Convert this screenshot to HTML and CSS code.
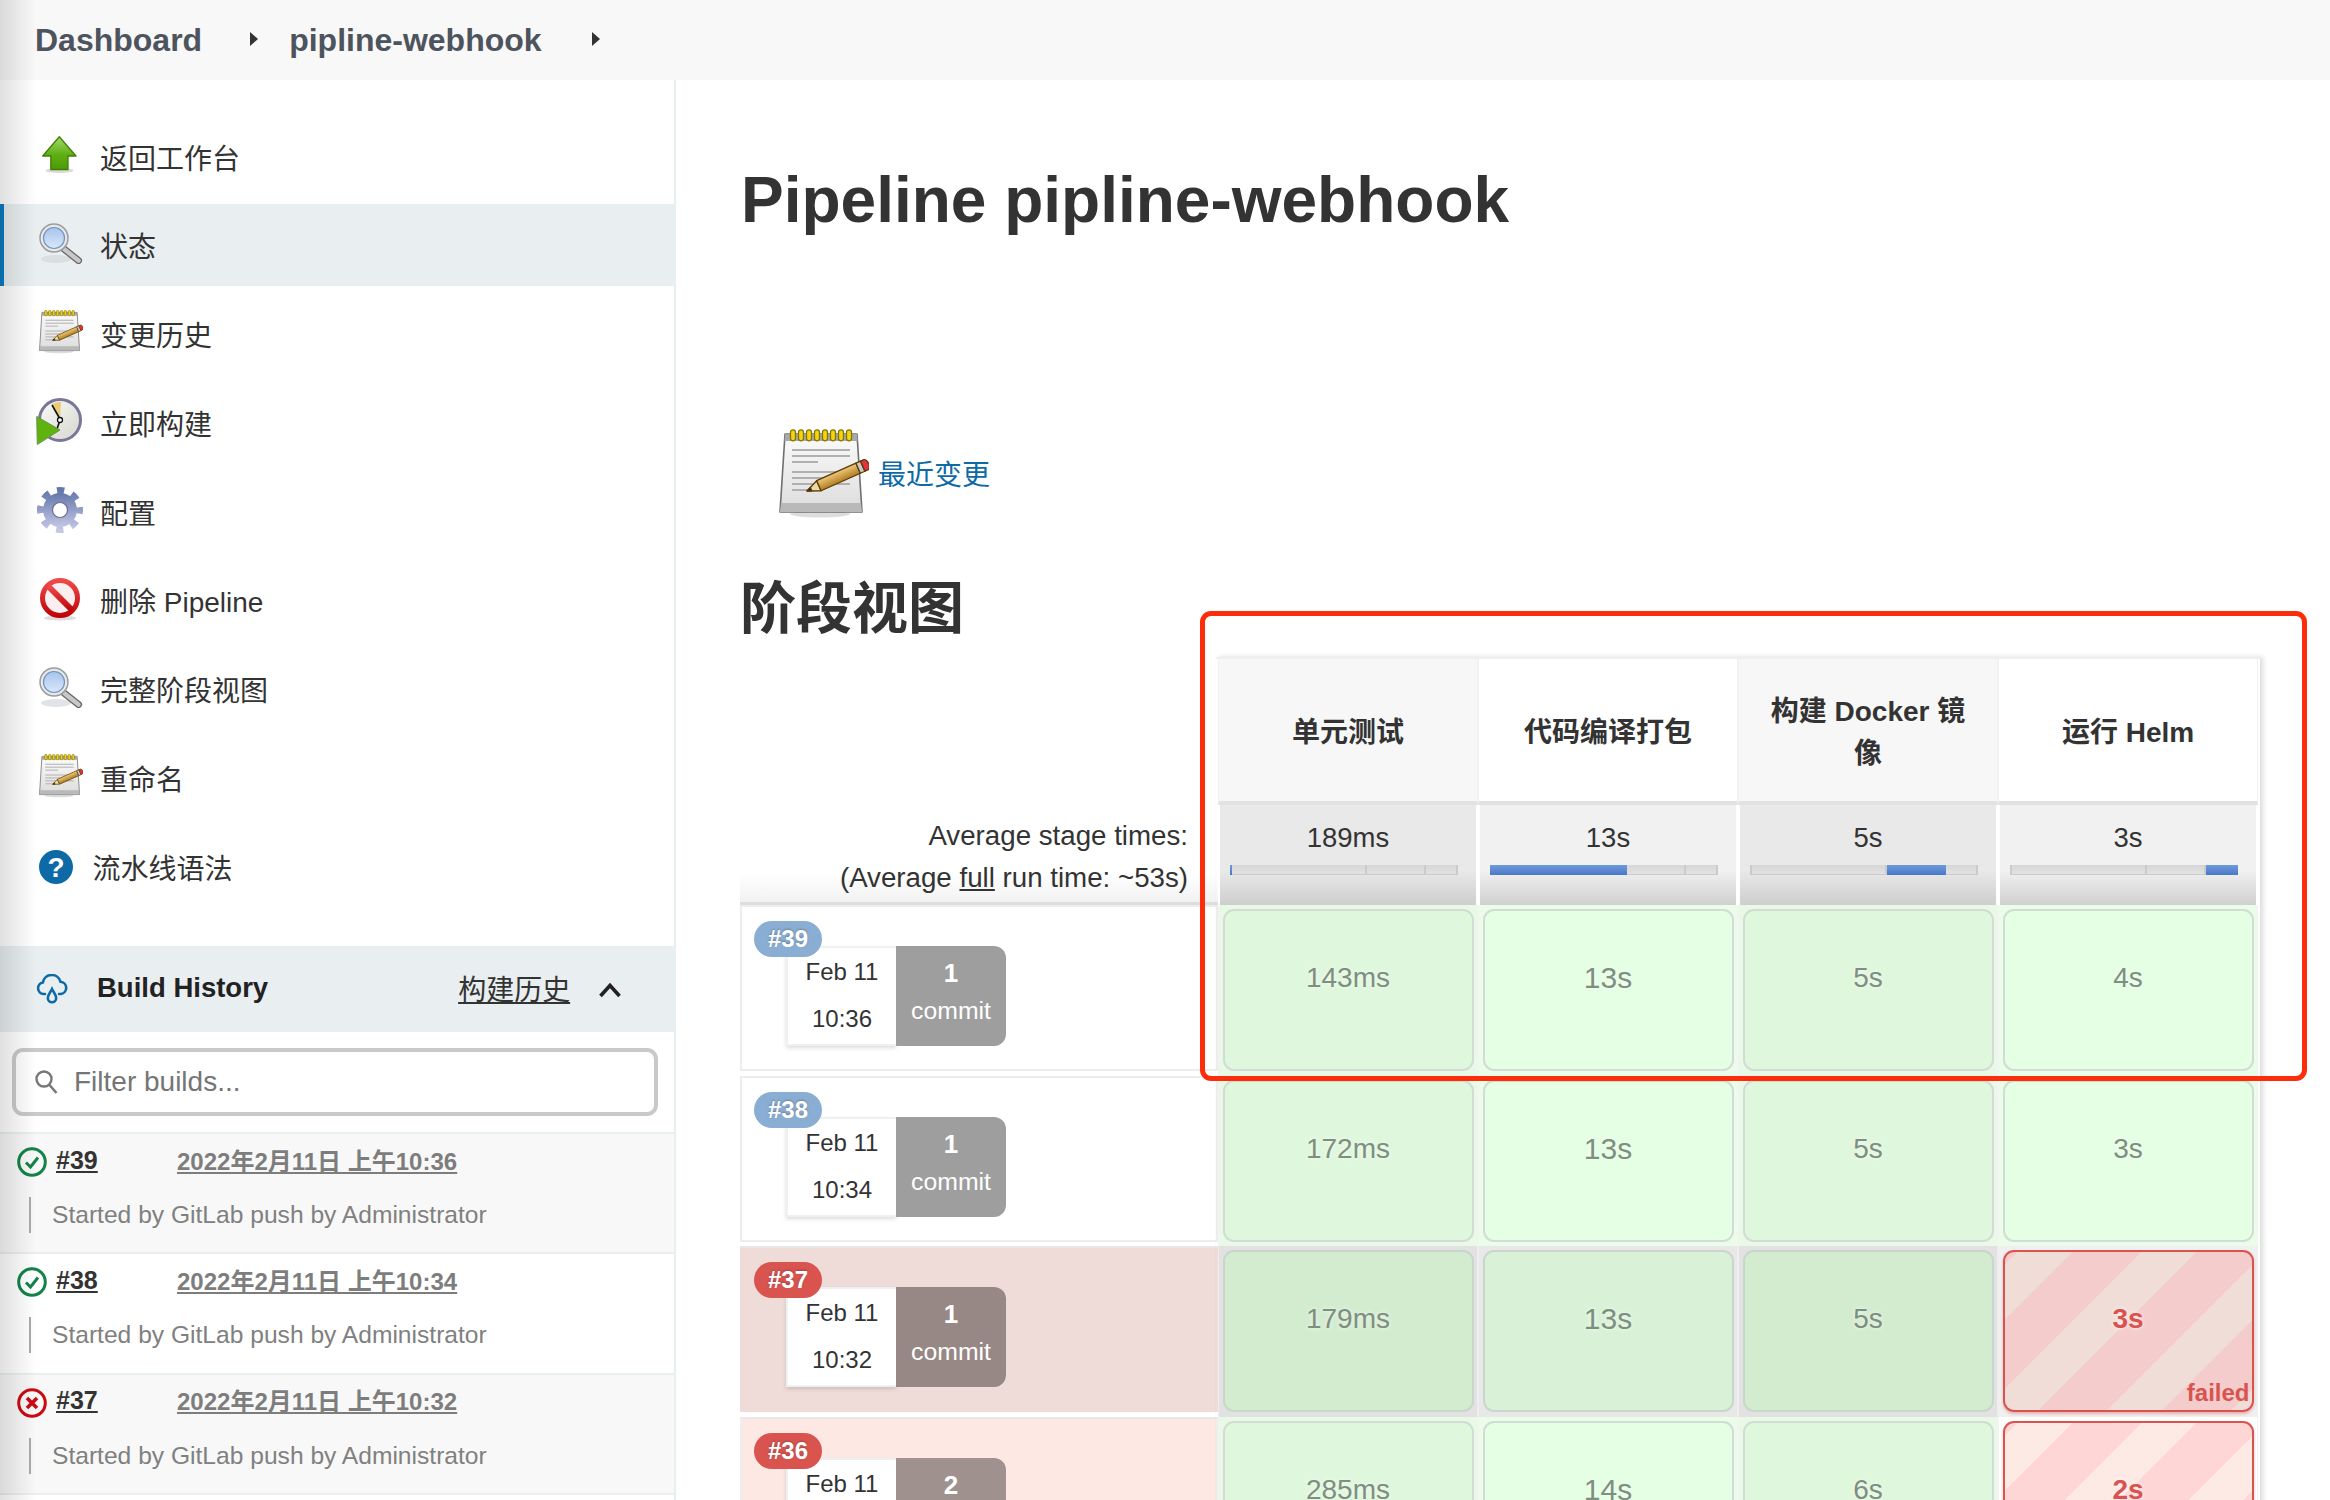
FILE: index.html
```html
<!DOCTYPE html>
<html lang="en">
<head>
    <meta charset="UTF-8">
    <meta name="viewport" content="width=device-width, initial-scale=1.0">
    <title>pipline-webhook</title>
    <link rel="stylesheet" href="styles.css">
</head>
<body>
    <svg class="sprite" xmlns="http://www.w3.org/2000/svg">
        <defs>
            <linearGradient id="g-green" x1="0" y1="0" x2="0" y2="1"><stop offset="0" stop-color="#a4d96a"/><stop offset=".55" stop-color="#5fae14"/><stop offset="1" stop-color="#4c9a06"/></linearGradient>
            <linearGradient id="g-page" x1="0" y1="0" x2="0" y2="1"><stop offset="0" stop-color="#fbfbfb"/><stop offset="1" stop-color="#dcdcdc"/></linearGradient>
            <linearGradient id="g-pencil" x1="0" y1="0" x2="0" y2="1"><stop offset="0" stop-color="#efc878"/><stop offset="1" stop-color="#b07c22"/></linearGradient>
            <linearGradient id="g-lens" x1="0" y1="0" x2="0" y2="1"><stop offset="0" stop-color="#a6c4ec"/><stop offset="1" stop-color="#dbe8f8"/></linearGradient>
            <linearGradient id="g-gear" x1="0" y1="0" x2="0" y2="1"><stop offset="0" stop-color="#6478ac"/><stop offset="1" stop-color="#c4c6e4"/></linearGradient>
            <linearGradient id="g-face" x1="0" y1="0" x2="1" y2="1"><stop offset="0" stop-color="#fafafa"/><stop offset="1" stop-color="#d6d6cc"/></linearGradient>
            <linearGradient id="g-stop" x1="0" y1="0" x2="0" y2="1"><stop offset="0" stop-color="#ef4a4a"/><stop offset="1" stop-color="#bf0508"/></linearGradient>
        </defs>
        <symbol id="i-notepad" viewBox="0 0 90 90">
            <ellipse cx="41" cy="85" rx="30" ry="3.5" fill="#ddd"/>
            <path d="M6 5H78L83 83H1Z" fill="url(#g-page)" stroke="#6f6f6f" stroke-width="1.6" stroke-linejoin="round"/>
            <path d="M6 5H78L78.500 12H5.500Z" fill="#a8a8a8"/>
            <path d="M2 74H82L83 83H1Z" fill="#b9b9b9"/>
            <g stroke="#b0b0b0" stroke-width="2">
                <path d="M13 21H71M13 27H71M13 33H39M13 43H71M13 49H62M13 55H71M13 61H40"/>
            </g>
            <g fill="#f0d416" stroke="#8a7400" stroke-width="1.300">
                <rect x="11.500" y="0.800" width="5" height="11" rx="2.500"/>
                <rect x="19.500" y="0.800" width="5" height="11" rx="2.500"/>
                <rect x="27.500" y="0.800" width="5" height="11" rx="2.500"/>
                <rect x="35.500" y="0.800" width="5" height="11" rx="2.500"/>
                <rect x="43.500" y="0.800" width="5" height="11" rx="2.500"/>
                <rect x="51.500" y="0.800" width="5" height="11" rx="2.500"/>
                <rect x="59.500" y="0.800" width="5" height="11" rx="2.500"/>
                <rect x="67.500" y="0.800" width="5" height="11" rx="2.500"/>
            </g>
            <g transform="translate(28 62) rotate(-24)" stroke="#5a3b05" stroke-width="1.300" stroke-linejoin="round">
                <path d="M0 0L13 -5.500V5.500Z" fill="#ecd9a8"/>
                <path d="M0 0L4.500 -1.900V1.900Z" fill="#222"/>
                <rect x="13" y="-5.500" width="43" height="11" fill="url(#g-pencil)"/>
                <rect x="56" y="-5.500" width="5" height="11" fill="#c9c9c9"/>
                <path d="M61 -5.500H64a3.500 5.500 0 0 1 0 11H61Z" fill="#e6323a"/>
            </g>
        </symbol>
        <symbol id="i-search" viewBox="0 0 44 42">
            <ellipse cx="17" cy="37" rx="15" ry="4" fill="#d4d8dc" opacity=".7"/>
            <path d="M25 27L39.500 38.500" stroke="#666" stroke-width="7" stroke-linecap="round"/>
            <path d="M25 27L39.500 38.500" stroke="#c8c8c8" stroke-width="4.500" stroke-linecap="round"/>
            <circle cx="15" cy="16" r="14" fill="#e8e8e8" stroke="#9c9c9c" stroke-width="1.500"/>
            <circle cx="15" cy="16" r="10.500" fill="url(#g-lens)" stroke="#6f93c6" stroke-width="1.200"/>
        </symbol>
    </svg>

    <header class="crumbs">
        <a class="crumb">Dashboard</a>
        <span class="crumb-arrow"></span>
        <a class="crumb">pipline-webhook</a>
        <span class="crumb-arrow"></span>
    </header>

    <div class="page">
        <aside class="sidebar">
            <nav class="tasks">
                <a class="task">
                    <span class="task-icon icon-arrow">
                        <svg width="36" height="38" viewBox="0 0 36 38">
                            <ellipse cx="17.500" cy="34.500" rx="14" ry="2.500" fill="#d9d9d9"/>
                            <path d="M17.300 .8L34 20H26V33.500H8.800V20H.7Z" fill="url(#g-green)" stroke="#3f8004" stroke-width="1.300" stroke-linejoin="round"/>
                        </svg>
                    </span>
                    <span>返回工作台</span>
                </a>
                <a class="task active">
                    <span class="task-icon icon-small"><svg width="44" height="42"><use href="#i-search"/></svg></span>
                    <span>状态</span>
                </a>
                <a class="task">
                    <span class="task-icon icon-small"><svg width="44" height="44"><use href="#i-notepad"/></svg></span>
                    <span>变更历史</span>
                </a>
                <a class="task">
                    <span class="task-icon">
                        <svg width="48" height="48" viewBox="0 0 48 48">
                            <circle cx="24" cy="23" r="20.500" fill="url(#g-face)" stroke="#77759a" stroke-width="3"/>
                            <path d="M24 23L16 7A18 18 0 0 1 25 5Z" fill="#eccb74"/>
                            <path d="M16 8L24 22" stroke="#111" stroke-width="1.600"/>
                            <path d="M24 23L21 32" stroke="#111" stroke-width="1.600"/>
                            <circle cx="24" cy="23" r="2.500" fill="#fff" stroke="#111" stroke-width="1.300"/>
                            <path d="M.7 19.500L24 33L1.300 47.500Z" fill="#5fb30e" stroke="#6a8f4a" stroke-width="1"/>
                        </svg>
                    </span>
                    <span>立即构建</span>
                </a>
                <a class="task">
                    <span class="task-icon">
                        <svg width="48" height="48" viewBox="0 0 48 48">
                            <circle cx="24" cy="24" r="19.500" fill="none" stroke="url(#g-gear)" stroke-width="7" stroke-dasharray="7.300 8.010" stroke-dashoffset="3.600"/>
                            <circle cx="24" cy="24" r="17" fill="url(#g-gear)"/>
                            <circle cx="24" cy="24" r="7.500" fill="#fff" stroke="#6a6c8e" stroke-width="1.200"/>
                        </svg>
                    </span>
                    <span>配置</span>
                </a>
                <a class="task">
                    <span class="task-icon icon-stop">
                        <svg width="42" height="44" viewBox="0 0 42 44">
                            <ellipse cx="21" cy="40" rx="16" ry="2.500" fill="#ddd"/>
                            <circle cx="21" cy="20" r="17.500" fill="#fbeeee" stroke="url(#g-stop)" stroke-width="5"/>
                            <path d="M9 8L33 32" stroke="url(#g-stop)" stroke-width="6"/>
                        </svg>
                    </span>
                    <span>删除 Pipeline</span>
                </a>
                <a class="task">
                    <span class="task-icon icon-small"><svg width="44" height="42"><use href="#i-search"/></svg></span>
                    <span>完整阶段视图</span>
                </a>
                <a class="task">
                    <span class="task-icon icon-small"><svg width="44" height="44"><use href="#i-notepad"/></svg></span>
                    <span>重命名</span>
                </a>
                <a class="task task-help">
                    <span class="task-icon">
                        <svg width="34" height="34" viewBox="0 0 34 34">
                            <circle cx="17" cy="17" r="17" fill="#0d6aa6"/>
                            <text x="17" y="27" class="help-mark">?</text>
                        </svg>
                    </span>
                    <span>流水线语法</span>
                </a>
            </nav>

            <section class="history-head">
                <svg class="cloud" width="32" height="30" viewBox="0 0 32 30">
                    <path d="M9 20H7.500a5.800 5.800 0 0 1-.6-11.500a9 9 0 0 1 17.600-.8a6.200 6.200 0 0 1 .5 12.300H23" fill="none" stroke="#0d6aa6" stroke-width="2.600" stroke-linecap="round"/>
                    <path d="M16 15c-2 4-4.200 6-4.200 9a4.200 4.200 0 0 0 8.400 0c0-3-2.200-5-4.200-9Z" fill="none" stroke="#0d6aa6" stroke-width="2.600"/>
                </svg>
                <strong class="history-title">Build History</strong>
                <a class="history-link">构建历史</a>
                <svg class="chevron" width="24" height="16" viewBox="0 0 24 16">
                    <path d="M2.500 14L12 3.500L21.500 14" fill="none" stroke="#222" stroke-width="3.600"/>
                </svg>
            </section>

            <div class="filter-wrap">
                <div class="filter">
                    <svg width="24" height="26" viewBox="0 0 24 26">
                        <circle cx="10" cy="10" r="7.500" fill="none" stroke="#777" stroke-width="2.400"/>
                        <path d="M15.500 16L22.500 24" stroke="#777" stroke-width="2.600"/>
                    </svg>
                    <span>Filter builds...</span>
                </div>
            </div>

            <div class="builds">
                <div class="build odd">
                    <div class="build-top">
                        <svg class="status" width="30" height="30" viewBox="0 0 30 30">
                            <circle cx="15" cy="15" r="13.300" fill="none" stroke="#138347" stroke-width="3"/>
                            <path d="M9 15.500L13.500 20L21 10.500" fill="none" stroke="#138347" stroke-width="3"/>
                        </svg>
                        <a class="build-no">#39</a>
                        <a class="build-date">2022年2月11日 上午10:36</a>
                    </div>
                    <div class="build-cause">Started by GitLab push by Administrator</div>
                </div>
                <div class="build">
                    <div class="build-top">
                        <svg class="status" width="30" height="30" viewBox="0 0 30 30">
                            <circle cx="15" cy="15" r="13.300" fill="none" stroke="#138347" stroke-width="3"/>
                            <path d="M9 15.500L13.500 20L21 10.500" fill="none" stroke="#138347" stroke-width="3"/>
                        </svg>
                        <a class="build-no">#38</a>
                        <a class="build-date">2022年2月11日 上午10:34</a>
                    </div>
                    <div class="build-cause">Started by GitLab push by Administrator</div>
                </div>
                <div class="build odd">
                    <div class="build-top">
                        <svg class="status" width="30" height="30" viewBox="0 0 30 30">
                            <circle cx="15" cy="15" r="13.300" fill="none" stroke="#cc0a12" stroke-width="3"/>
                            <path d="M10 10L20 20M20 10L10 20" fill="none" stroke="#cc0a12" stroke-width="3.600"/>
                        </svg>
                        <a class="build-no">#37</a>
                        <a class="build-date">2022年2月11日 上午10:32</a>
                    </div>
                    <div class="build-cause">Started by GitLab push by Administrator</div>
                </div>
                <div class="build"></div>
            </div>
        </aside>

        <main class="content">
            <h1 class="title">Pipeline pipline-webhook</h1>

            <div class="recent">
                <svg width="90" height="90"><use href="#i-notepad"/></svg>
                <a class="recent-link">最近变更</a>
            </div>

            <h2 class="stage-title">阶段视图</h2>

            <div class="stage-view">
                <div class="stage-row">
                    <div class="blank"></div>
                    <div class="stage-name">单元测试</div>
                    <div class="stage-name">代码编译打包</div>
                    <div class="stage-name">构建 Docker 镜像</div>
                    <div class="stage-name">运行 Helm</div>
                </div>
                <div class="stage-row">
                    <div class="avg-label">
                        <div>Average stage times:</div>
                        <div>(Average <u>full</u> run time: ~53s)</div>
                    </div>
                    <div class="avg-cell">
                        <div>189ms</div>
                        <div class="bar"><i class="on" style="width:1%"></i><i style="width:59%"></i><i style="width:26%"></i><i style="width:14%"></i></div>
                    </div>
                    <div class="avg-cell">
                        <div>13s</div>
                        <div class="bar"><i style="width:1%" class="on"></i><i class="on" style="width:59%"></i><i style="width:26%"></i><i style="width:14%"></i></div>
                    </div>
                    <div class="avg-cell">
                        <div>5s</div>
                        <div class="bar"><i style="width:1%"></i><i style="width:59%"></i><i class="on" style="width:26%"></i><i style="width:14%"></i></div>
                    </div>
                    <div class="avg-cell">
                        <div>3s</div>
                        <div class="bar"><i style="width:1%"></i><i style="width:59%"></i><i style="width:26%"></i><i class="on" style="width:14%"></i></div>
                    </div>
                </div>

                <div class="stage-row build-row">
                    <div class="run">
                        <span class="badge">#39</span>
                        <div class="run-when"><div>Feb 11</div><div>10:36</div></div>
                        <div class="run-commits"><b>1</b><span>commit</span></div>
                    </div>
                    <div class="cell"><div class="card">143ms</div></div>
                    <div class="cell"><div class="card big">13s</div></div>
                    <div class="cell"><div class="card">5s</div></div>
                    <div class="cell"><div class="card">4s</div></div>
                </div>
                <div class="stage-row build-row">
                    <div class="run">
                        <span class="badge">#38</span>
                        <div class="run-when"><div>Feb 11</div><div>10:34</div></div>
                        <div class="run-commits"><b>1</b><span>commit</span></div>
                    </div>
                    <div class="cell"><div class="card">172ms</div></div>
                    <div class="cell"><div class="card big">13s</div></div>
                    <div class="cell"><div class="card">5s</div></div>
                    <div class="cell"><div class="card">3s</div></div>
                </div>
                <div class="stage-row build-row failed-odd">
                    <div class="run">
                        <span class="badge">#37</span>
                        <div class="run-when"><div>Feb 11</div><div>10:32</div></div>
                        <div class="run-commits"><b>1</b><span>commit</span></div>
                    </div>
                    <div class="cell"><div class="card">179ms</div></div>
                    <div class="cell"><div class="card big">13s</div></div>
                    <div class="cell"><div class="card">5s</div></div>
                    <div class="cell cell-failed"><div class="card failed">3s<span class="failed-tag">failed</span></div></div>
                </div>
                <div class="stage-row build-row failed-even">
                    <div class="run">
                        <span class="badge">#36</span>
                        <div class="run-when"><div>Feb 11</div></div>
                        <div class="run-commits"><b>2</b></div>
                    </div>
                    <div class="cell"><div class="card">285ms</div></div>
                    <div class="cell"><div class="card big">14s</div></div>
                    <div class="cell"><div class="card">6s</div></div>
                    <div class="cell cell-failed"><div class="card failed">2s</div></div>
                </div>
            </div>

            <div class="annotation"></div>
        </main>
    </div>
    <div class="edge-shade"></div>
</body>
</html>
```

FILE: styles.css
```css
html, body {
    margin: 0;
    height: 1500px;
    overflow: hidden;
    background: #fff;
}
body {
    position: relative;
    font-family: "Liberation Sans", "Noto Sans CJK SC", sans-serif;
    font-size: 28px;
    color: #333;
}
.sprite {
    position: absolute;
    width: 0;
    height: 0;
}

/* breadcrumb */
.crumbs {
    height: 80px;
    background: #f8f8f8;
    display: flex;
    align-items: center;
    padding-left: 35px;
    box-sizing: border-box;
}
.crumb {
    font-size: 32px;
    font-weight: 700;
    color: #4d545d;
}
.crumb-arrow {
    width: 0;
    height: 0;
    margin: -3px 0 0 48px;
    border-left: 8px solid #333;
    border-top: 7.5px solid transparent;
    border-bottom: 7.5px solid transparent;
}
.crumb-arrow + .crumb {
    margin-left: 31px;
}
.crumb + .crumb-arrow + .crumb + .crumb-arrow {
    margin-left: 50px;
}

.page {
    display: flex;
    height: 1420px;
}
.edge-shade {
    position: absolute;
    left: 0;
    top: 0;
    width: 36px;
    height: 1500px;
    background: linear-gradient(to right, rgba(0, 0, 0, .12), rgba(0, 0, 0, 0));
    pointer-events: none;
}

/* sidebar */
.sidebar {
    width: 674px;
    flex: none;
    border-right: 2px solid #e9eff1;
    overflow: hidden;
}
.tasks {
    display: flex;
    flex-direction: column;
    gap: 6.8px;
    padding-top: 35.5px;
    height: 866px;
    box-sizing: border-box;
}
.task {
    height: 82px;
    flex: none;
    display: flex;
    align-items: center;
    padding-left: 36px;
    color: #333;
}
.task.active {
    background: #e9eef1;
    box-shadow: inset 4px 0 0 #0b7cc1;
}
.task-icon {
    width: 64px;
    flex: none;
    display: flex;
    align-items: center;
    justify-content: flex-start;
    margin-top: -4px;
    box-sizing: border-box;
}
.icon-arrow {
    padding-left: 6px;
}
.icon-small {
    padding-left: 3px;
}
.icon-stop {
    padding-left: 3px;
    margin-top: 0;
}
.task-help .task-icon {
    width: 56.5px;
    padding-left: 3px;
    margin-top: 0;
}
.help-mark {
    font-family: "Liberation Sans", sans-serif;
    font-size: 28px;
    font-weight: 700;
    fill: #fff;
    text-anchor: middle;
}

.history-head {
    height: 86px;
    background: #e9eef1;
    display: flex;
    align-items: center;
    padding-left: 36px;
}
.history-title {
    margin-left: 29px;
    margin-top: -2px;
    font-size: 27.5px;
    color: #222;
}
.history-link {
    margin-left: 190px;
    margin-top: -2px;
    color: #333;
    text-decoration: underline;
}
.chevron {
    margin-left: 28px;
    margin-top: 2px;
}

.filter-wrap {
    padding: 16px 16px 16px 12px;
}
.filter {
    height: 68px;
    border: 4px solid #c9c9c9;
    border-radius: 11px;
    background: #fff;
    box-sizing: border-box;
    display: flex;
    align-items: center;
    gap: 16px;
    padding-left: 18px;
    color: #757575;
}

.builds {
    display: flex;
    flex-direction: column;
}
.build {
    height: 120.3px;
    flex: none;
    box-sizing: border-box;
    border-top: 2px solid #e9eff1;
    padding: 13px 0 0 17px;
}
.build.odd {
    background: #f8f8f8;
}
.build-top {
    display: flex;
    align-items: center;
    height: 30px;
}
.build-no {
    margin-left: 9px;
    margin-top: -4px;
    width: 121px;
    font-size: 25px;
    font-weight: 700;
    color: #333;
    text-decoration: underline;
}
.build-date {
    font-size: 24px;
    font-weight: 700;
    color: #7d7d7d;
    text-decoration: underline;
    white-space: nowrap;
    margin-top: -6px;
}
.build-cause {
    margin: 20px 0 0 12px;
    padding-left: 21px;
    height: 36px;
    line-height: 36px;
    border-left: 2px solid #aaa;
    font-size: 24.6px;
    color: #808080;
    white-space: nowrap;
}

/* main */
.content {
    position: relative;
    flex: 1;
    min-width: 0;
    padding-left: 64px;
}
.title {
    margin: 0 0 0 1px;
    padding-top: 82px;
    font-size: 64px;
    line-height: 76px;
    font-weight: 700;
    color: #333;
}
.recent {
    margin: 191px 0 0 39px;
    height: 90px;
    display: flex;
    align-items: center;
    gap: 9px;
}
.recent-link {
    color: #0d6aa6;
    margin-top: -2px;
}
.stage-title {
    margin: 0;
    padding-top: 56px;
    font-size: 56px;
    line-height: 68px;
    font-weight: 700;
    color: #333;
}

.stage-view {
    margin-top: 14px;
    width: 1520px;
    position: relative;
}
.stage-view::after {
    content: "";
    position: absolute;
    left: 476px;
    right: 0;
    top: 0;
    height: 900px;
    border-top: 2px solid #edf0f2;
    box-shadow: 3px 0 5px rgba(0, 0, 0, .14);
    pointer-events: none;
}
.stage-row {
    display: grid;
    grid-template-columns: 478px repeat(4, 260px);
}
.stage-name {
    height: 146px;
    margin-top: 2px;
    box-sizing: border-box;
    border-bottom: 4px solid #e2e2e2;
    border-left: 1px solid #f1f1f1;
    border-right: 1px solid #f1f1f1;
    padding: 6px 20px 0;
    display: flex;
    align-items: center;
    justify-content: center;
    text-align: center;
    font-weight: 700;
    line-height: 42px;
    color: #333;
}
.stage-name:nth-child(even) {
    background: #f7f7f7;
}
.avg-label {
    text-align: right;
    padding-right: 30px;
    line-height: 42px;
    padding-top: 10px;
    height: 100px;
    box-sizing: border-box;
    white-space: nowrap;
    background: linear-gradient(to bottom, #fff 70%, #f2f2f2 100%);
    border-bottom: 3px solid #ddd;
    font-size: 27.7px;
}
.avg-cell {
    margin: 0 2px;
    height: 100px;
    box-sizing: border-box;
    padding-top: 12px;
    text-align: center;
    font-size: 27.5px;
    line-height: 42px;
    background: linear-gradient(to bottom, #f1f1f1 65%, #d0d0d0 100%);
}
.avg-cell:nth-child(even) {
    background: linear-gradient(to bottom, #e9e9e9 65%, #cecece 100%);
}
.bar {
    display: flex;
    width: 228px;
    height: 10px;
    margin: 6px auto 0 10px;
    background: #d8d8d8;
}
.bar i {
    display: block;
    height: 10px;
    box-sizing: border-box;
    background: linear-gradient(to bottom, #d6d6d6, #e2e2e2);
    border-right: 2px solid #cbcbcb;
    border-bottom: 1px solid #cbcbcb;
}
.bar i.on {
    background: linear-gradient(to bottom, #6e9bdb, #4a78c8);
    border: 0;
}

.build-row {
    height: 170.6px;
}
.run {
    position: relative;
    height: 166px;
    margin-top: 0;
    box-sizing: border-box;
    border: 2px solid #ededed;
    display: flex;
    align-items: flex-start;
    padding: 39px 0 0 44px;
    background: #fff;
}
.failed-odd .run {
    background: #efdcd8;
    border-color: #efdcd8;
    border-top-color: #e8e8e8;
}
.failed-even .run {
    background: #fee8e4;
    border-top-color: #e8e8e8;
}
.badge {
    position: absolute;
    left: 12px;
    top: 14px;
    z-index: 1;
    width: 68px;
    height: 36px;
    border-radius: 18px;
    background: #8aaed3;
    color: #fff;
    font-size: 24px;
    font-weight: 700;
    line-height: 36px;
    text-align: center;
    text-shadow: 0 -1px 2px rgba(60, 60, 60, .4);
}
.failed-odd .badge, .failed-even .badge {
    background: #d9534f;
}
.run-when {
    width: 110px;
    height: 100px;
    box-sizing: border-box;
    background: #fff;
    border-left: 2px solid #edf1f3;
    border-top: 2px solid #edf1f3;
    border-bottom: 2px solid #edf1f3;
    box-shadow: 0 2px 4px rgba(0, 0, 0, .14);
    text-align: center;
    font-size: 24px;
    color: #333;
    line-height: 47px;
}
.run-commits {
    width: 110px;
    height: 100px;
    box-sizing: border-box;
    border-radius: 0 12px 12px 0;
    background: #9e9e9e;
    color: #fff;
    text-align: center;
    padding-top: 8px;
    display: flex;
    flex-direction: column;
    line-height: 38px;
}
.run-commits b {
    font-size: 26px;
}
.run-commits span {
    font-size: 24.8px;
}
.failed-odd .run-commits {
    background: #978886;
}
.failed-even .run-commits {
    background: #9f918e;
}

.cell {
    background: #e8fae6;
    box-sizing: border-box;
    padding: 4px 3.5px 0;
    border-left: 1px solid #f3f3f3;
    border-right: 1px solid #f3f3f3;
}
.cell:nth-child(odd) {
    background: #eafde8;
}
.card {
    position: relative;
    height: 162px;
    box-sizing: border-box;
    padding-top: 47px;
    border: 2px solid #d2dcd5;
    border-radius: 11px;
    background: #dff7dd;
    text-align: center;
    font-size: 28px;
    line-height: 40px;
    color: #7e8f80;
    text-shadow: 0 0 4px rgba(255, 255, 255, .7);
}
.cell:nth-child(odd) .card {
    background: #e4ffe3;
}
.card.big {
    font-size: 30px;
}
.failed-odd .cell {
    background: #e2e2e2;
    border-color: #eeeeee;
}
.failed-odd .cell:nth-child(odd) {
    background: #e8e8e8;
}
.failed-odd .card {
    background: #d3ecd0;
    border-color: #c8d6cb;
}
.failed-odd .cell:nth-child(odd) .card {
    background: #d9f2d7;
}
.failed-odd .cell.cell-failed {
    background: #f0f0f0;
}
.failed-even .cell.cell-failed {
    background: #fff;
}

.failed-odd .cell.cell-failed .card.failed,
.failed-even .cell.cell-failed .card.failed {
    border-color: #d9534f;
    box-shadow: 0 2px 3px rgba(217, 83, 79, .4);
    color: #d9534f;
    font-weight: 700;
    text-shadow: 0 0 4px rgba(255, 255, 255, .8);
}
.failed-odd .cell.cell-failed .card.failed {
    background: repeating-linear-gradient(135deg, #f4cccc 0, #f4cccc 8.5px, #f1ddd8 8.5px, #f1ddd8 48px, #f4cccc 48px, #f4cccc 87.7px);
}
.failed-even .cell.cell-failed .card.failed {
    background: repeating-linear-gradient(135deg, #ffd6d6 0, #ffd6d6 8.5px, #feeae5 8.5px, #feeae5 48px, #ffd6d6 48px, #ffd6d6 87.7px);
}
.failed-tag {
    position: absolute;
    right: 2px;
    bottom: 2px;
    font-size: 24px;
    line-height: 30px;
    text-shadow: none;
}

/* red box drawn over the screenshot */
.annotation {
    position: absolute;
    left: 524px;
    top: 531px;
    width: 1107px;
    height: 470px;
    box-sizing: border-box;
    border: 5.5px solid #fb2d0b;
    border-radius: 11px;
    pointer-events: none;
}
```
